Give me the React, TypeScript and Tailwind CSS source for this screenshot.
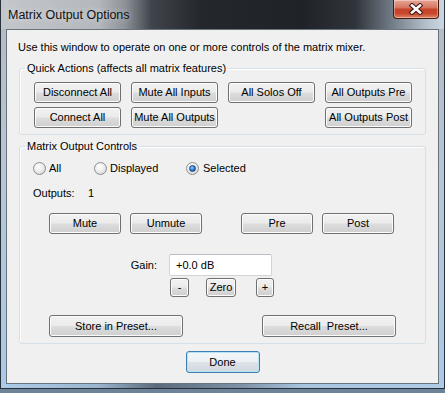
import clsx from 'clsx';
import type { ReactNode } from 'react';

function Btn({ children, className }: { children: ReactNode; className?: string }) {
    return (
        <button
            className={clsx(
                'flex items-center justify-center rounded-[3px] border border-[#707070] bg-[linear-gradient(180deg,#f2f2f2_0%,#ebebeb_48%,#dddddd_52%,#cfcfcf_100%)] shadow-[inset_0_0_0_1px_#fcfcfc] text-[11px] leading-none text-black whitespace-pre',
                className
            )}
        >
            {children}
        </button>
    );
}

function Radio({ checked }: { checked?: boolean }) {
    return (
        <span className="flex h-[13px] w-[13px] items-center justify-center rounded-full border border-[#8e8f8f] bg-[radial-gradient(circle_at_40%_35%,#ffffff_0%,#f0f0f0_40%,#c9c9c9_100%)]">
            {checked && (
                <span className="h-[7px] w-[7px] rounded-full border border-[#17477e] bg-[radial-gradient(circle_at_40%_35%,#9fd3ff_0%,#2e7fd6_50%,#0b4a9a_100%)]" />
            )}
        </span>
    );
}

export default function App() {
    return (
        <div className="h-[393px] w-[445px] overflow-hidden bg-[#6f8398] font-['Liberation_Sans',Arial,sans-serif] text-black">
            {/* ventana */}
            <div className="flex h-[389px] flex-col border-x border-b border-[#26313c] bg-[linear-gradient(180deg,#b4bac1_0%,#b7c6d5_45%,#abc9e8_100%)]">
                {/* barra de titulo */}
                <div className="flex h-[29px] items-start bg-[linear-gradient(90deg,#c3c7cb_0%,#b4b8bc_22%,#8d9298_28%,#40454b_34%,#24282d_45%,#1f2328_68%,#30353b_80%,#6f7a85_88%,#b4c0cb_96%,#cdd7e0_100%)]">
                    <span className="mt-[8px] pl-[7px] text-[12.5px] leading-[14px] text-[#111] [text-shadow:0_0_6px_rgba(255,255,255,0.6)]">
                        Matrix Output Options
                    </span>
                    <div className="ml-auto mr-[5px] flex h-[19px] w-[46px] items-center justify-center rounded-b-[4px] border border-t-0 border-[#4a1a10] bg-[linear-gradient(180deg,#e8a696_0%,#d77662_42%,#c4432a_52%,#c8472d_75%,#de8566_100%)] shadow-[inset_0_0_0_1px_rgba(255,255,255,0.35)]">
                        <svg width="16" height="12" viewBox="0 0 16 12">
                            <path d="M4 2.5 L12 9.5 M12 2.5 L4 9.5" stroke="#3b1a12" strokeWidth="4.6" strokeLinecap="square" />
                            <path d="M4 2.5 L12 9.5 M12 2.5 L4 9.5" stroke="#ffffff" strokeWidth="2.6" strokeLinecap="square" />
                        </svg>
                    </div>
                </div>

                <div className="flex flex-1 flex-col px-[5px]">
                    {/* area cliente */}
                    <div className="flex flex-1 flex-col border border-[#68737e] bg-[#f0f0f0] text-[11px]">
                        <p className="pl-[11px] pt-[10px] leading-[14px]">
                            Use this window to operate on one or more controls of the matrix mixer.
                        </p>

                        {/* Quick Actions */}
                        <fieldset className="mx-[12px] mt-[7px] rounded-[3px] border border-[#d5dfe5] pb-[6px] pt-[7px] shadow-[inset_1px_1px_0_#ffffff]">
                            <legend className="ml-[5px] px-[2px] leading-[14px]">Quick Actions (affects all matrix features)</legend>
                            <div className="flex flex-col gap-[4px] pl-[14px]">
                                <div className="flex gap-[10px]">
                                    <Btn className="h-[21px] w-[87px]">Disconnect All</Btn>
                                    <Btn className="h-[21px] w-[87px]">Mute All Inputs</Btn>
                                    <Btn className="h-[21px] w-[87px]">All Solos Off</Btn>
                                    <Btn className="h-[21px] w-[87px]">All Outputs Pre</Btn>
                                </div>
                                <div className="flex gap-[10px]">
                                    <Btn className="h-[21px] w-[87px]">Connect All</Btn>
                                    <Btn className="h-[21px] w-[87px]">Mute All Outputs</Btn>
                                    <div className="w-[87px]" />
                                    <Btn className="h-[21px] w-[87px]">All Outputs Post</Btn>
                                </div>
                            </div>
                        </fieldset>

                        {/* Matrix Output Controls */}
                        <fieldset className="mx-[12px] mt-[4px] flex flex-col rounded-[3px] border border-[#d5dfe5] pb-[6px] pt-[8px] shadow-[inset_1px_1px_0_#ffffff]">
                            <legend className="ml-[5px] px-[2px] leading-[14px]">Matrix Output Controls</legend>

                            <div className="flex h-[14px] items-center pl-[13px]">
                                <label className="flex w-[61px] items-center gap-[3px]"><Radio />All</label>
                                <label className="flex w-[92px] items-center gap-[3px]"><Radio />Displayed</label>
                                <label className="flex items-center gap-[4px]"><Radio checked />Selected</label>
                            </div>

                            <div className="mt-[11px] flex h-[14px] items-center pl-[13px]">
                                <span className="w-[55px]">Outputs:</span>
                                <span>1</span>
                            </div>

                            <div className="mt-[13px] flex pl-[29px]">
                                <Btn className="h-[21px] w-[72px]">Mute</Btn>
                                <Btn className="ml-[9px] h-[21px] w-[72px]">Unmute</Btn>
                                <Btn className="ml-[39px] h-[21px] w-[72px]">Pre</Btn>
                                <Btn className="ml-[9px] h-[21px] w-[72px]">Post</Btn>
                            </div>

                            <div className="mt-[20px] flex h-[22px] items-center">
                                <span className="w-[137px] text-right">Gain:</span>
                                <div className="ml-[12px] flex h-[22px] w-[103px] items-center rounded-[2px] border border-[#cfd4da] border-t-[#b9bec4] bg-white pl-[6px]">
                                    +0.0 dB
                                </div>
                            </div>

                            <div className="mt-[2px] flex pl-[150px]">
                                <Btn className="h-[19px] w-[19px]">-</Btn>
                                <Btn className="ml-[17px] h-[19px] w-[30px]">Zero</Btn>
                                <Btn className="ml-[20px] h-[19px] w-[18px]">+</Btn>
                            </div>

                            <div className="mt-[18px] flex pl-[29px]">
                                <Btn className="h-[22px] w-[134px]">Store in Preset...</Btn>
                                <Btn className="ml-[79px] h-[22px] w-[134px]">Recall  Preset...</Btn>
                            </div>
                        </fieldset>

                        <button className="mt-[7px] flex h-[22px] w-[74px] items-center justify-center self-center rounded-[3px] border border-[#3c7fb1] bg-[linear-gradient(180deg,#f3f7f9_0%,#ebf0f3_48%,#dde3e8_52%,#d1d8de_100%)] shadow-[inset_0_0_0_1px_#b7e2f8] text-[11px] leading-none">
                            Done
                        </button>
                    </div>
                </div>

                {/* borde inferior */}
                <div className="h-[4px] bg-[linear-gradient(90deg,#aecbe8_0%,#9ab5cf_22%,#5a6b7c_35%,#7f94a9_55%,#a9c4df_68%,#aecbe8_100%)]" />
            </div>
        </div>
    );
}
